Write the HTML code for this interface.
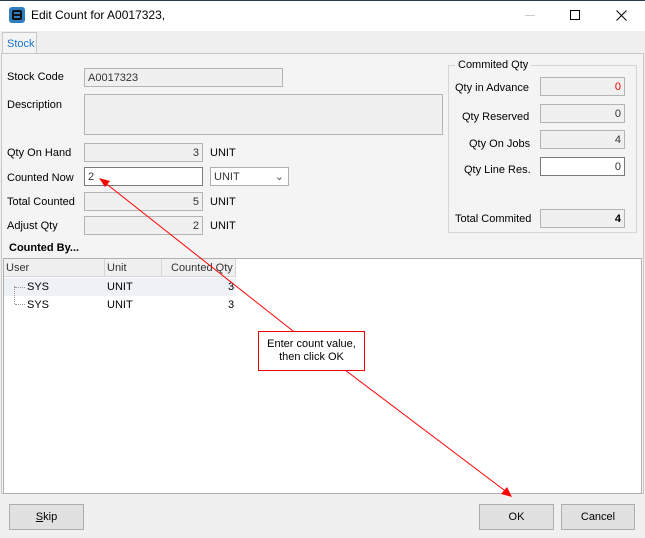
<!DOCTYPE html>
<html><head><style>
*{box-sizing:border-box;margin:0;padding:0}
body{width:645px;height:538px;overflow:hidden;background:#f0f0f0;font-family:"Liberation Sans",sans-serif;font-size:11px;color:#000;position:relative}
.a{position:absolute}
.in{position:absolute;border:1px solid #b4b4b4;background:#f0f0f0;height:19px;line-height:18px;padding:0 3px;color:#333}
.r{text-align:right}
.w{background:#fff;border-color:#7a7a7a}
.lbl{position:absolute}
.btn{position:absolute;border:1px solid #adadad;background:#e1e1e1;text-align:center;line-height:24px;height:26px;font-size:11px}
</style></head><body>
<div class="a" style="left:0;top:0;width:645px;height:1px;background:#2b3b4b"></div>
<div class="a" style="left:0;top:1px;width:645px;height:30px;background:#fff"></div>
<div class="a" style="left:9px;top:7px;width:16px;height:16px;background:#2d7fc1;border-radius:3px"></div>
<div class="a" style="left:12px;top:10px;width:10px;height:10px;border:2px solid #111;border-radius:2px"></div>
<div class="a" style="left:12px;top:14px;width:10px;height:2px;background:#111"></div>
<div class="a" style="left:31px;top:8px;font-size:12px">Edit Count for A0017323,</div>
<div class="a" style="left:525px;top:15px;width:10px;height:1px;background:#ccc"></div>
<div class="a" style="left:570px;top:10px;width:10px;height:10px;border:1px solid #000"></div>
<svg class="a" style="left:616px;top:10px" width="11" height="11"><path d="M0.5 0.5L10.5 10.5M10.5 0.5L0.5 10.5" stroke="#000" stroke-width="1"/></svg>
<div class="a" style="left:2px;top:32px;width:35px;height:22px;background:#f4f4f4;border:1px solid #c8c8c8;border-bottom:none;color:#1a73c6;padding:5px 0 0 4px">Stock</div>
<div class="a" style="left:1px;top:53px;width:643px;height:441px;background:#f4f4f4;border:1px solid #c8c8c8"></div>
<div class="a" style="left:36px;top:53px;width:607px;height:1px;background:#c8c8c8"></div>
<div class="lbl" style="left:7px;top:71px">Stock Code</div>
<div class="in" style="left:84px;top:68px;width:199px">A0017323</div>
<div class="lbl" style="left:7px;top:99px">Description</div>
<div class="in" style="left:84px;top:94px;width:359px;height:41px"></div>
<div class="lbl" style="left:7px;top:147px">Qty On Hand</div>
<div class="in r" style="left:84px;top:143px;width:119px">3</div>
<div class="lbl" style="left:210px;top:147px">UNIT</div>
<div class="lbl" style="left:7px;top:172px">Counted Now</div>
<div class="in w" style="left:84px;top:167px;width:119px">2</div>
<div class="in w" style="left:210px;top:167px;width:79px;border-color:#adadad">UNIT<span style="position:absolute;right:4px;top:0;color:#555">⌄</span></div>
<div class="lbl" style="left:7px;top:196px">Total Counted</div>
<div class="in r" style="left:84px;top:192px;width:119px">5</div>
<div class="lbl" style="left:210px;top:196px">UNIT</div>
<div class="lbl" style="left:7px;top:220px">Adjust Qty</div>
<div class="in r" style="left:84px;top:216px;width:119px">2</div>
<div class="lbl" style="left:210px;top:220px">UNIT</div>
<div class="a" style="left:448px;top:65px;width:189px;height:168px;border:1px solid #d5d5d5"></div>
<div class="a" style="left:455px;top:59px;background:#f4f4f4;padding:0 3px">Commited Qty</div>
<div class="lbl" style="left:455px;top:82px">Qty in Advance</div>
<div class="in r" style="left:540px;top:77px;width:85px;color:#e00">0</div>
<div class="lbl" style="left:462px;top:111px">Qty Reserved</div>
<div class="in r" style="left:540px;top:104px;width:85px">0</div>
<div class="lbl" style="left:469px;top:138px">Qty On Jobs</div>
<div class="in r" style="left:540px;top:130px;width:85px">4</div>
<div class="lbl" style="left:464px;top:164px">Qty Line Res.</div>
<div class="in r w" style="left:540px;top:157px;width:85px">0</div>
<div class="lbl" style="left:455px;top:213px">Total Commited</div>
<div class="in r" style="left:540px;top:209px;width:85px;font-weight:bold;color:#000">4</div>
<div class="lbl" style="left:9px;top:242px;font-weight:bold">Counted By...</div>
<div class="a" style="left:3px;top:258px;width:639px;height:236px;background:#fff;border:1px solid #b0b0b0"></div>
<div class="a" style="left:4px;top:259px;width:232px;height:18px;background:#f0f0f0;border-bottom:1px solid #d5d5d5"></div>
<div class="a" style="left:104px;top:259px;width:1px;height:18px;background:#d5d5d5"></div>
<div class="a" style="left:161px;top:259px;width:1px;height:18px;background:#d5d5d5"></div>
<div class="a" style="left:235px;top:259px;width:1px;height:18px;background:#d5d5d5"></div>
<div class="lbl" style="left:6px;top:262px;color:#333">User</div>
<div class="lbl" style="left:107px;top:262px;color:#333">Unit</div>
<div class="lbl" style="left:171px;top:262px;color:#333">Counted Qty</div>
<div class="a" style="left:4px;top:278px;width:232px;height:18px;background:#eef1f6"></div>
<div class="a" style="left:14px;top:286px;width:1px;height:18px;border-left:1px dotted #999"></div>
<div class="a" style="left:15px;top:287px;width:10px;border-top:1px dotted #999"></div>
<div class="a" style="left:15px;top:304px;width:10px;border-top:1px dotted #999"></div>
<div class="lbl" style="left:27px;top:281px">SYS</div>
<div class="lbl" style="left:107px;top:281px">UNIT</div>
<div class="lbl" style="left:228px;top:281px">3</div>
<div class="lbl" style="left:27px;top:299px">SYS</div>
<div class="lbl" style="left:107px;top:299px">UNIT</div>
<div class="lbl" style="left:228px;top:299px">3</div>
<div class="btn" style="left:9px;top:504px;width:75px"><u>S</u>kip</div>
<div class="btn" style="left:479px;top:504px;width:75px">OK</div>
<div class="btn" style="left:561px;top:504px;width:74px">Cancel</div>
<svg class="a" style="left:0;top:0" width="645" height="538">
<line x1="293" y1="331" x2="104" y2="182" stroke="#f00" stroke-width="1"/>
<polygon points="99,178 110,181 105,187" fill="#f00"/>
<line x1="345" y1="370" x2="508" y2="493" stroke="#f00" stroke-width="1"/>
<polygon points="512,497 501,494 507,487" fill="#f00"/>
</svg>
<div class="a" style="left:258px;top:331px;width:107px;height:40px;background:#fff;border:1px solid #e00;text-align:center;padding-top:6px;line-height:13px">Enter count value,<br>then click OK</div>
</body></html>
